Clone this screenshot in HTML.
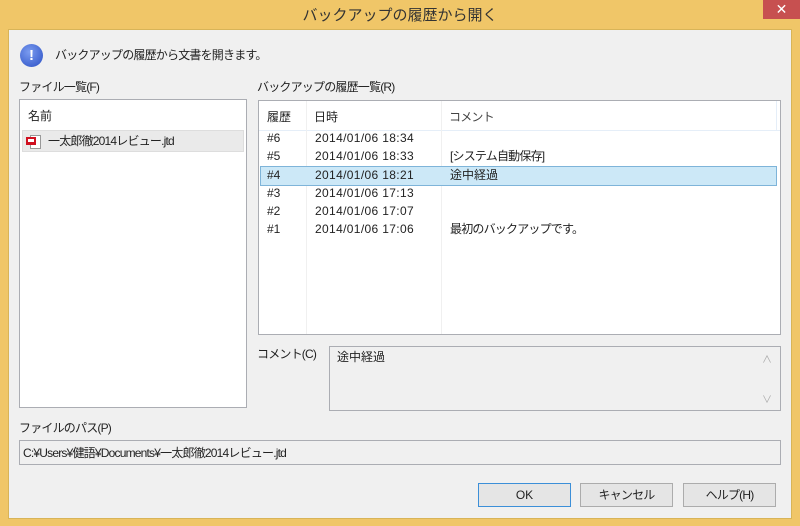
<!DOCTYPE html>
<html><head><meta charset="utf-8"><style>
*{margin:0;padding:0;box-sizing:border-box}
body{width:800px;height:526px;background:#f0c668;font-family:"Liberation Sans","Noto Sans CJK JP",sans-serif;font-size:12px;color:#222;position:relative;overflow:hidden}
.a{position:absolute;white-space:nowrap}
.j{letter-spacing:-0.8px}
.client{position:absolute;left:8px;top:29px;width:784px;height:490px;background:#f0f0f0;border:1px solid #d8b458}
.box{position:absolute;background:#fff;border:1px solid #abadb3}
.btn{position:absolute;width:93px;height:24px;background:#e5e5e5;border:1px solid #acacac;text-align:center;line-height:22px}
.row{position:absolute;left:1px;width:519px;height:18px;line-height:18px}
.d{letter-spacing:0.35px}
</style></head><body>
<div class="a" style="left:0;top:4px;width:800px;text-align:center;font-size:15px;color:#333">バックアップの履歴から開く</div>
<div class="a" style="left:763px;top:0;width:37px;height:19px;background:#c75050;color:#fff;text-align:center;font-size:14px;line-height:18px">✕</div>
<div class="client"></div>
<div class="a" style="left:20px;top:44px;width:23px;height:23px;border-radius:50%;background:radial-gradient(circle at 40% 35%,#7b9cf0,#2a4fc4);color:#fff;font-weight:bold;text-align:center;line-height:23px;font-size:15px">!</div>
<div class="a j" style="left:55px;top:46px">バックアップの履歴から文書を開きます。</div>
<div class="a j" style="left:19px;top:78px">ファイル一覧(F)</div>
<div class="box" style="left:19px;top:99px;width:228px;height:309px">
 <div class="a" style="left:8px;top:7px">名前</div>
 <div class="a" style="left:2px;top:30px;width:222px;height:22px;background:#eaeaea;border:1px solid #ddd"></div>
 <div class="a" style="left:10px;top:35px;width:11px;height:14px;background:#fff;border:1px solid #999"></div>
 <div class="a" style="left:6px;top:37px;width:10px;height:8px;background:#d01020"></div>
 <div class="a" style="left:8px;top:39px;width:6px;height:3px;background:#fff"></div>
 <div class="a j" style="left:28px;top:32px">一太郎徹2014レビュー.jtd</div>
</div>
<div class="a j" style="left:257px;top:78px">バックアップの履歴一覧(R)</div>
<div class="box" style="left:258px;top:100px;width:523px;height:235px">
 <div class="a" style="left:0;top:0;width:521px;height:30px;border-bottom:1px solid #e5eef8"></div>
 <div class="a" style="left:47px;top:0;width:1px;height:233px;background:#f0f0f0"></div>
 <div class="a" style="left:182px;top:0;width:1px;height:233px;background:#f0f0f0"></div>
 <div class="a" style="left:517px;top:0;width:1px;height:30px;background:#e5eef8"></div>
 <div class="a" style="left:8px;top:7px">履歴</div><div class="a" style="left:55px;top:7px">日時</div><div class="a j" style="left:190px;top:7px;color:#444">コメント</div>
 <div class="row" style="top:28px"><span class="a" style="left:7px">#6</span><span class="a d" style="left:55px">2014/01/06 18:34</span></div>
 <div class="row" style="top:46px"><span class="a" style="left:7px">#5</span><span class="a d" style="left:55px">2014/01/06 18:33</span><span class="a j" style="left:190px">[システム自動保存]</span></div>
 <div class="row" style="top:65px;width:517px;height:20px;background:#cce8f7;border:1px solid #7eb4d9;line-height:17px"><span class="a" style="left:6px">#4</span><span class="a d" style="left:54px">2014/01/06 18:21</span><span class="a" style="left:189px">途中経過</span></div>
 <div class="row" style="top:83px"><span class="a" style="left:7px">#3</span><span class="a d" style="left:55px">2014/01/06 17:13</span></div>
 <div class="row" style="top:101px"><span class="a" style="left:7px">#2</span><span class="a d" style="left:55px">2014/01/06 17:07</span></div>
 <div class="row" style="top:119px"><span class="a" style="left:7px">#1</span><span class="a d" style="left:55px">2014/01/06 17:06</span><span class="a j" style="left:190px">最初のバックアップです。</span></div>
</div>
<div class="a j" style="left:257px;top:345px">コメント(C)</div>
<div class="box" style="left:329px;top:346px;width:452px;height:65px;background:#f0f0f0">
 <div class="a" style="left:7px;top:1px">途中経過</div>
 <div class="a" style="left:432px;top:4px;color:#aaa;font-size:10px">∧</div>
 <div class="a" style="left:432px;top:44px;color:#aaa;font-size:10px">∨</div>
</div>
<div class="a j" style="left:19px;top:419px">ファイルのパス(P)</div>
<div class="box" style="left:19px;top:440px;width:762px;height:25px;background:#f0f0f0"><div class="a j" style="left:3px;top:3px">C:¥Users¥健語¥Documents¥一太郎徹2014レビュー.jtd</div></div>
<div class="btn" style="left:478px;top:483px;border-color:#3c8fd8">OK</div>
<div class="btn j" style="left:580px;top:483px">キャンセル</div>
<div class="btn j" style="left:683px;top:483px">ヘルプ(H)</div>
</body></html>
